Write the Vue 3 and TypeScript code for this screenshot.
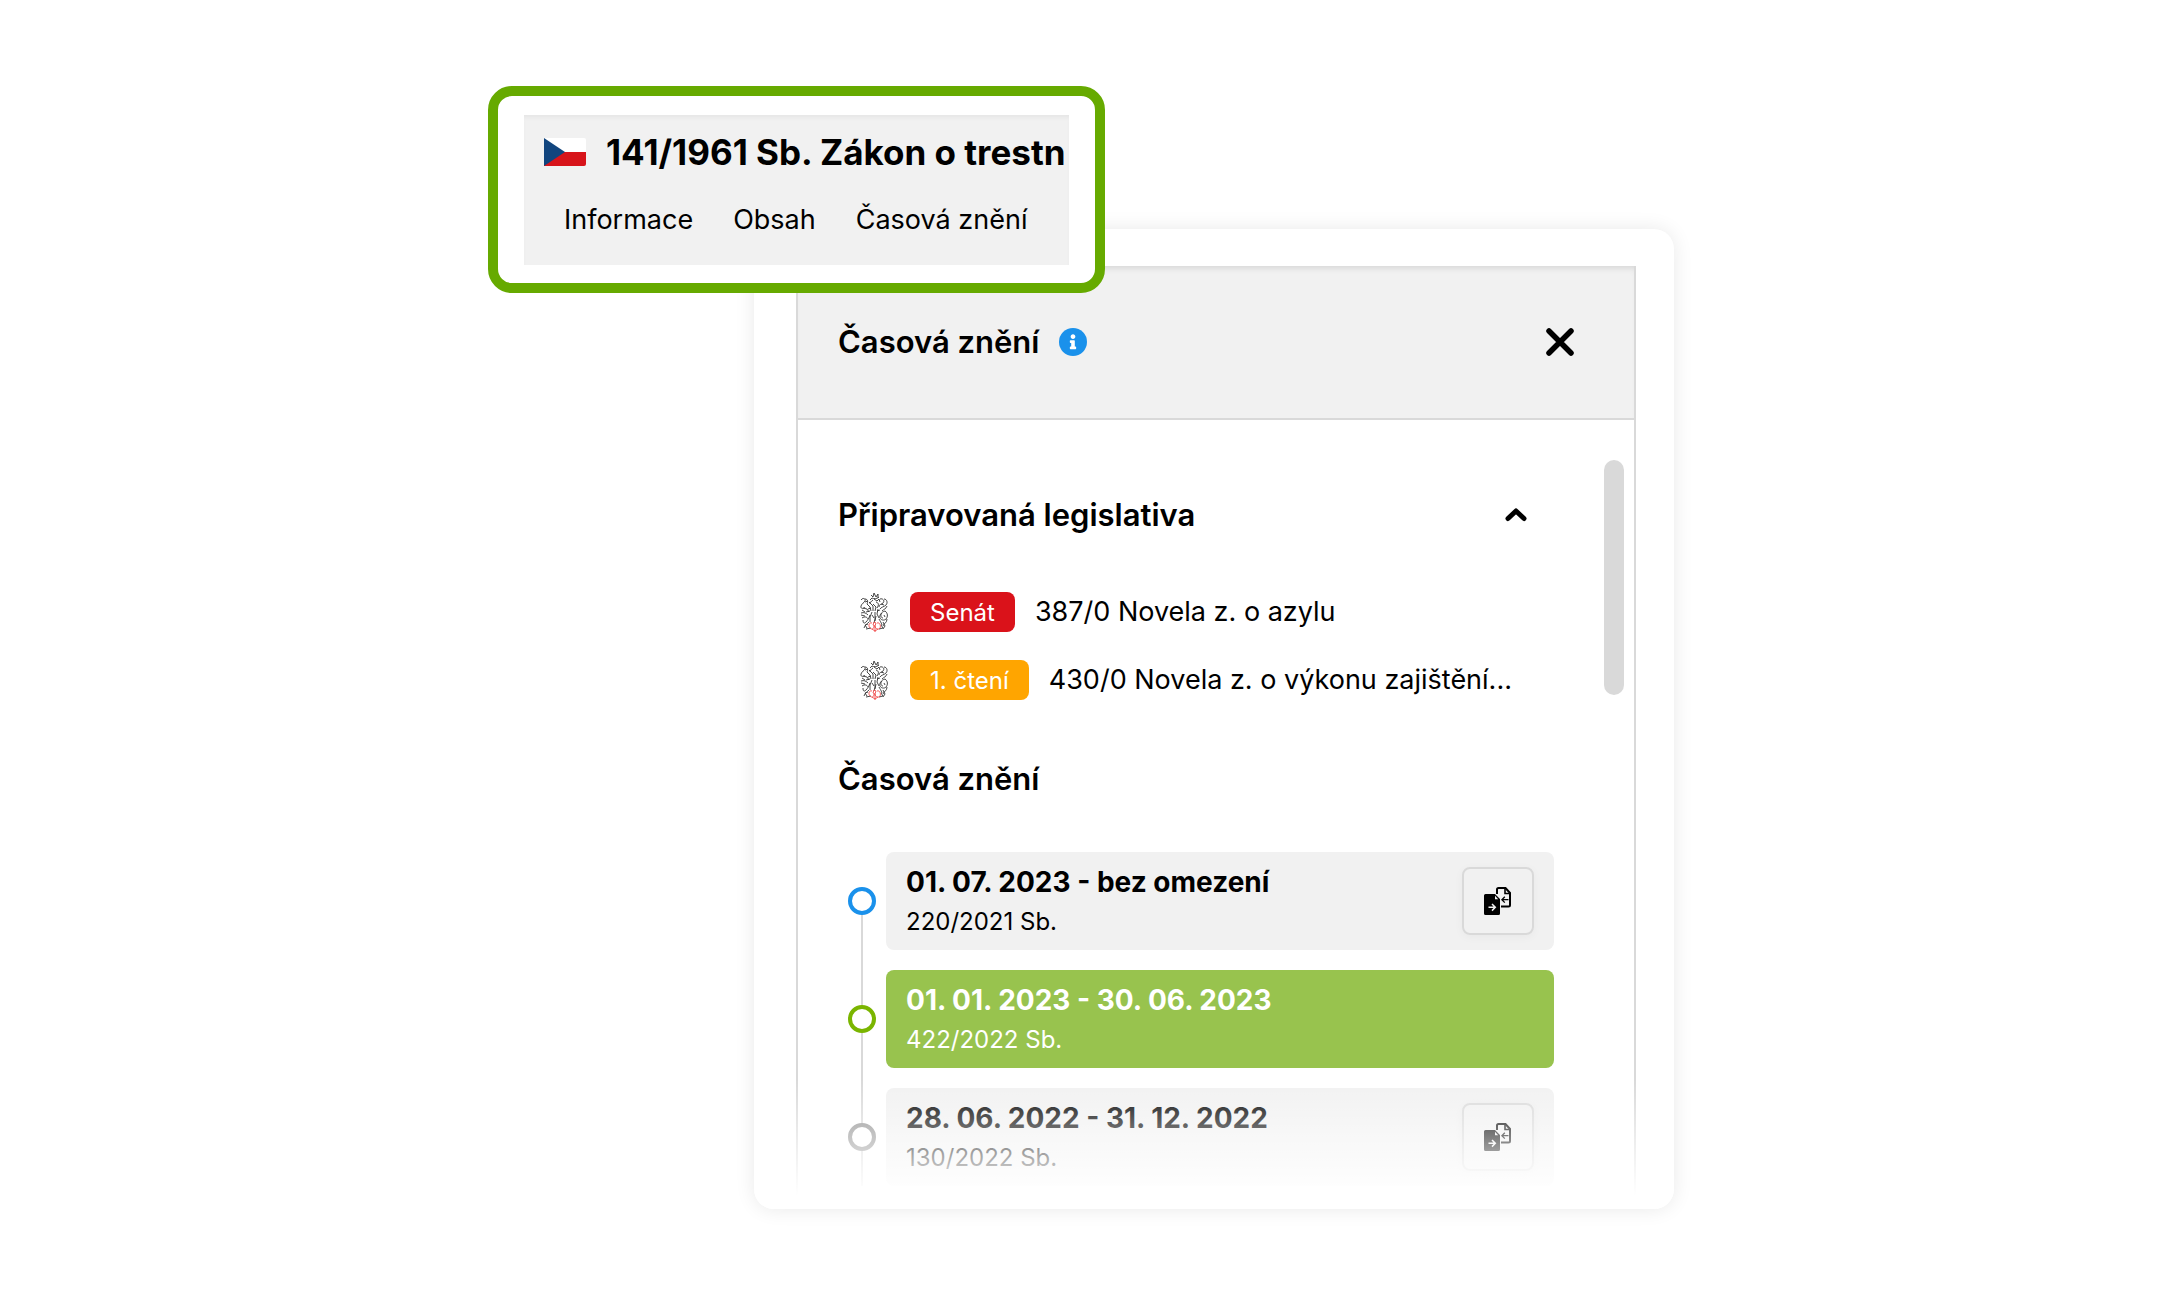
<script setup lang="ts">
interface Bill {
  id: string
  stage: string
  tone: 'red' | 'orange'
  title: string
}

interface Version {
  range: string
  source: string
  state: 'future' | 'current' | 'past'
}

const tabs: string[] = ['Informace', 'Obsah', 'Časová znění']

const bills: Bill[] = [
  { id: '387', stage: 'Senát', tone: 'red', title: '387/0 Novela z. o azylu' },
  { id: '430', stage: '1. čtení', tone: 'orange', title: '430/0 Novela z. o výkonu zajištění...' },
]

const versions: Version[] = [
  { range: '01. 07. 2023 - bez omezení', source: '220/2021 Sb.', state: 'future' },
  { range: '01. 01. 2023 - 30. 06. 2023', source: '422/2022 Sb.', state: 'current' },
  { range: '28. 06. 2022 - 31. 12. 2022', source: '130/2022 Sb.', state: 'past' },
]
</script>

<template>
  <main class="stage">
    <section class="callout">
      <div class="law">
        <div class="law-head">
          <svg class="flag" viewBox="0 0 42 28" aria-hidden="true">
            <path d="M0 0H40a2 2 0 0 1 2 2V14H0z" fill="#fff" />
            <path d="M0 14H42V26a2 2 0 0 1-2 2H0z" fill="#d7141a" />
            <path d="M0 0L21 14L0 28z" fill="#11457e" />
          </svg>
          <h1>141/1961 Sb. Zákon o trestn</h1>
        </div>
        <nav class="tabs">
          <a v-for="tab in tabs" :key="tab" href="#">{{ tab }}</a>
        </nav>
      </div>
    </section>

    <section class="card">
      <div class="panel">
        <header class="panel-head">
          <h2>Časová znění</h2>
          <svg class="info" viewBox="8 8 496 496" aria-hidden="true">
            <circle cx="256" cy="256" r="248" fill="#1a91eb" />
            <path
              fill="#fff"
              d="M256 118c23.196 0 42 18.804 42 42s-18.804 42-42 42-42-18.804-42-42 18.804-42 42-42zm56 254c0 6.627-5.373 12-12 12h-88c-6.627 0-12-5.373-12-12v-24c0-6.627 5.373-12 12-12h12v-64h-12c-6.627 0-12-5.373-12-12v-24c0-6.627 5.373-12 12-12h64c6.627 0 12 5.373 12 12v100h12c6.627 0 12 5.373 12 12v24z"
            />
          </svg>
          <button class="close" type="button" aria-label="Zavřít">
            <svg width="28" height="28" viewBox="0 0 28 28">
              <path d="M3 3L25 25M25 3L3 25" fill="none" stroke="#000" stroke-width="5.500" stroke-linecap="round" />
            </svg>
          </button>
        </header>

        <div class="panel-body">
          <div class="content">
            <div class="group-head">
              <h3>Připravovaná legislativa</h3>
              <button class="toggle" type="button" aria-label="Sbalit">
                <svg width="22" height="14" viewBox="0 0 22 14">
                  <path d="M3 10.500L11 3L19 10.500" fill="none" stroke="#000" stroke-width="5" stroke-linecap="round" stroke-linejoin="round" />
                </svg>
              </button>
            </div>

            <ul class="bills">
              <li v-for="bill in bills" :key="bill.id">
                <svg class="lion" viewBox="0 0 28 40" aria-hidden="true">
                  <g fill="none" stroke="#333" stroke-width="0.9">
                    <path d="M11 3l2 2 1-4 2 4 2-3v4M12 6c2 1 5 1 7-1M13 8c-2 1-2 3-4 3M14 7l3 2 2-2 1 3" />
                    <path d="M1 8c2-3 5-1 4 1S2 11 1 14s3 3 4 1M5 7c3 0 3 3 2 5M7 12l3 3 1 4M9 10l4 4v5M3 16l4 1 2 3M13 12l3 3-1 4M16 10c3 1 3 3 1 6" />
                    <path d="M20 7c3-1 5 2 3 4s-4 1-4 4M24 7c3 0 4 4 2 6s-5 2-6 4M27 14c-1 3-3 3-5 5M25 19c3 2 3 6 1 8s-5 1-6-1 1-6 5-7M22 21c-2 2-1 5 1 5M27 27c0 4-3 4-4 7" />
                    <path d="M1 21c3-1 5 0 7 2M1 23l4 1M2 26c3-2 5-1 6 1M3 28c0 3 1 4 3 2s3-4 4-7M4 36c1-3 3-4 5-6M6 37l5-1M12 20l-2 5v5M15 20v7l-1 4M18 17l-1 5 2 4M19 27c1 2 2 3 3 6M19 37l4-1-2-3M11 16l-3 1M17 19l3-1" />
                    <path d="M2 18l3 2M6 20l4-1M5 10l3-1M12 23l2 3M8 32l-3 1 2 3M23 30l2 4-2 3M21 12l3 1M10 8l2-2M16 24l-1 5M24 23l1 2" />
                  </g>
                  <g fill="none" stroke="#f04848" stroke-width="0.9">
                    <path d="M12 31c-3-1-4 3-2 5s4 1 4-2M17 31c3-1 4 3 3 5s-5 1-5-2M14 30l-1 3 2 1 1-3zM12 37l3 2 3-2M15 34v6" />
                  </g>
                </svg>
                <span class="badge" :class="bill.tone">{{ bill.stage }}</span>
                <a class="bill-title" href="#">{{ bill.title }}</a>
              </li>
            </ul>

            <h3 class="versions-title">Časová znění</h3>

            <ol class="timeline">
              <li v-for="version in versions" :key="version.range" :class="version.state">
                <div class="marker">
                  <span class="line lead"></span>
                  <span class="dot"></span>
                  <span class="line rest"></span>
                </div>
                <article class="version">
                  <div class="version-text">
                    <strong>{{ version.range }}</strong>
                    <span>{{ version.source }}</span>
                  </div>
                  <button v-if="version.state !== 'current'" class="compare" type="button" aria-label="Porovnat znění">
                    <svg width="28" height="28" viewBox="0 0 28 28">
                      <path d="M13 7V2.500a1.500 1.500 0 0 1 1.500-1.500H21.500L26 6V18a1.500 1.500 0 0 1-1.500 1.500H17" fill="none" stroke="#000" stroke-width="2" />
                      <path d="M21 1V6.500H26.500" fill="none" stroke="#000" stroke-width="1.600" />
                      <path d="M24.500 12.700H18M20.800 9.800L17.900 12.700L20.800 15.600" fill="none" stroke="#000" stroke-width="1.300" />
                      <path d="M1.500 7H11L16 12V26.500a1.500 1.500 0 0 1-1.500 1.500H1.500A1.500 1.500 0 0 1 0 26.500V8.500A1.500 1.500 0 0 1 1.500 7z" fill="#000" />
                      <path d="M11 8.800V12.200H14.200z" fill="#f1f1f1" />
                      <path d="M4.500 20.300H11M8 17L11.300 20.300L8 23.600" fill="none" stroke="#f1f1f1" stroke-width="1.500" />
                    </svg>
                  </button>
                </article>
              </li>
            </ol>
          </div>
          <div class="thumb"></div>
        </div>
      </div>
      <div class="fade"></div>
    </section>
  </main>
</template>

<style>
body {
  margin: 0;
  background: #fff;
}
</style>

<style scoped>
.stage {
  box-sizing: border-box;
  max-width: 1186px;
  margin: 0 auto;
  padding: 86px 0 84px;
  font-family: Inter, 'Liberation Sans', sans-serif;
  color: #000;
}

h1,
h2,
h3,
ul,
ol {
  margin: 0;
  padding: 0;
  list-style: none;
}

h2,
h3 {
  font-weight: 600;
}

h1,
strong {
  font-weight: 700;
}

a {
  color: inherit;
  text-decoration: none;
}

button {
  display: flex;
  align-items: center;
  justify-content: center;
  padding: 0;
  border: 0;
  background: none;
}

.callout {
  position: relative;
  z-index: 1;
  box-sizing: border-box;
  width: 52%;
  padding: 19px 26px 18px;
  border: 10px solid #66aa00;
  border-radius: 24px;
  background: #fff;
}

.law {
  padding: 12px 0 27px 20px;
  background: #f1f1f1;
  box-shadow: inset 0 4px 4px -2px #e4e4e4;
}

.law-head {
  display: flex;
  align-items: center;
  gap: 20px;
  height: 50px;
}

.flag {
  flex: none;
  width: 42px;
  height: 28px;
}

h1 {
  font-size: 35px;
  line-height: 50px;
  white-space: nowrap;
}

.tabs {
  display: flex;
  gap: 40px;
  margin-top: 25px;
  padding-left: 20px;
  font-size: 27px;
  line-height: 36px;
  white-space: nowrap;
}

.card {
  position: relative;
  width: calc(100% - 266px);
  margin: -64px 0 0 auto;
  border-radius: 20px;
  background: #fff;
  box-shadow: 0 0 20px rgba(0, 0, 0, 0.09);
}

.card,
.panel,
.panel-head {
  box-sizing: border-box;
}

.card {
  padding: 37px 38px 0 42px;
}

.panel {
  border: 2px solid #d9d9d9;
  border-width: 0 2px;
}

.panel-head {
  display: flex;
  align-items: center;
  height: 154px;
  padding: 0 60px 0 40px;
  border-bottom: 2px solid #d9d9d9;
  background: #f1f1f1;
  box-shadow: inset 0 6px 6px -4px #d4d4d4;
}

h2,
h3 {
  font-size: 31px;
  line-height: 40px;
}

.info {
  width: 28px;
  height: 28px;
  margin-left: 20px;
}

.close {
  margin-left: auto;
}

.panel-body {
  display: flex;
  gap: 50px;
  padding: 40px 10px 23px 40px;
}

.content {
  flex: 1;
  min-width: 0;
}

.thumb {
  width: 20px;
  height: 235px;
  border-radius: 10px;
  background: #d9d9d9;
}

.group-head {
  display: flex;
  align-items: center;
  justify-content: space-between;
  height: 110px;
  padding-right: 27px;
}

.bills {
  display: grid;
  gap: 28px;
  margin-top: 22px;
  padding-left: 22px;
}

.bills li {
  display: flex;
  align-items: center;
  white-space: nowrap;
}

.lion {
  width: 28px;
  height: 40px;
  margin-right: 22px;
}

.badge {
  margin-right: 20px;
  padding: 1px 20px 0;
  border-radius: 8px;
  color: #fff;
  font-size: 24px;
  line-height: 39px;
}

.badge.red {
  background: #da121a;
}

.badge.orange {
  background: #ffa500;
}

.bill-title {
  font-size: 27px;
  line-height: 40px;
}

.versions-title {
  margin: 59px 0 53px;
}

.timeline li {
  display: flex;
}

.marker {
  display: flex;
  flex-direction: column;
  align-items: center;
  width: 48px;
}

.line {
  width: 2px;
  background: #d9d9d9;
}

.lead {
  height: 35px;
}

.rest {
  flex: 1;
}

.future .lead {
  background: none;
}

.dot {
  box-sizing: border-box;
  width: 28px;
  height: 28px;
  border: 4px solid #8c8c8c;
  border-radius: 50%;
}

.future .dot {
  border-color: #1a91eb;
}

.current .dot {
  border-color: #7ab500;
}

.version {
  display: flex;
  flex: 1;
  align-items: center;
  justify-content: space-between;
  box-sizing: border-box;
  height: 98px;
  margin-bottom: 20px;
  padding: 0 20px;
  border-radius: 8px;
  background: #f1f1f1;
}

.past .version {
  margin-bottom: 0;
}

.current .version {
  background: #98c34e;
  color: #fff;
}

.version-text {
  display: flex;
  flex-direction: column;
  padding-top: 2px;
  white-space: nowrap;
}

.version-text strong {
  font-size: 28px;
  line-height: 40px;
}

.version-text span {
  font-size: 24px;
  line-height: 40px;
}

.compare {
  box-sizing: border-box;
  width: 72px;
  height: 68px;
  border: 2px solid #d9d9d9;
  border-radius: 8px;
  box-shadow: 0 2px 10px rgba(0, 0, 0, 0.04);
}

.fade {
  position: absolute;
  right: 0;
  bottom: 0;
  left: 0;
  height: 130px;
  border-radius: 0 0 20px 20px;
  background: linear-gradient(rgba(255, 255, 255, 0), #fff 90%);
}
</style>
